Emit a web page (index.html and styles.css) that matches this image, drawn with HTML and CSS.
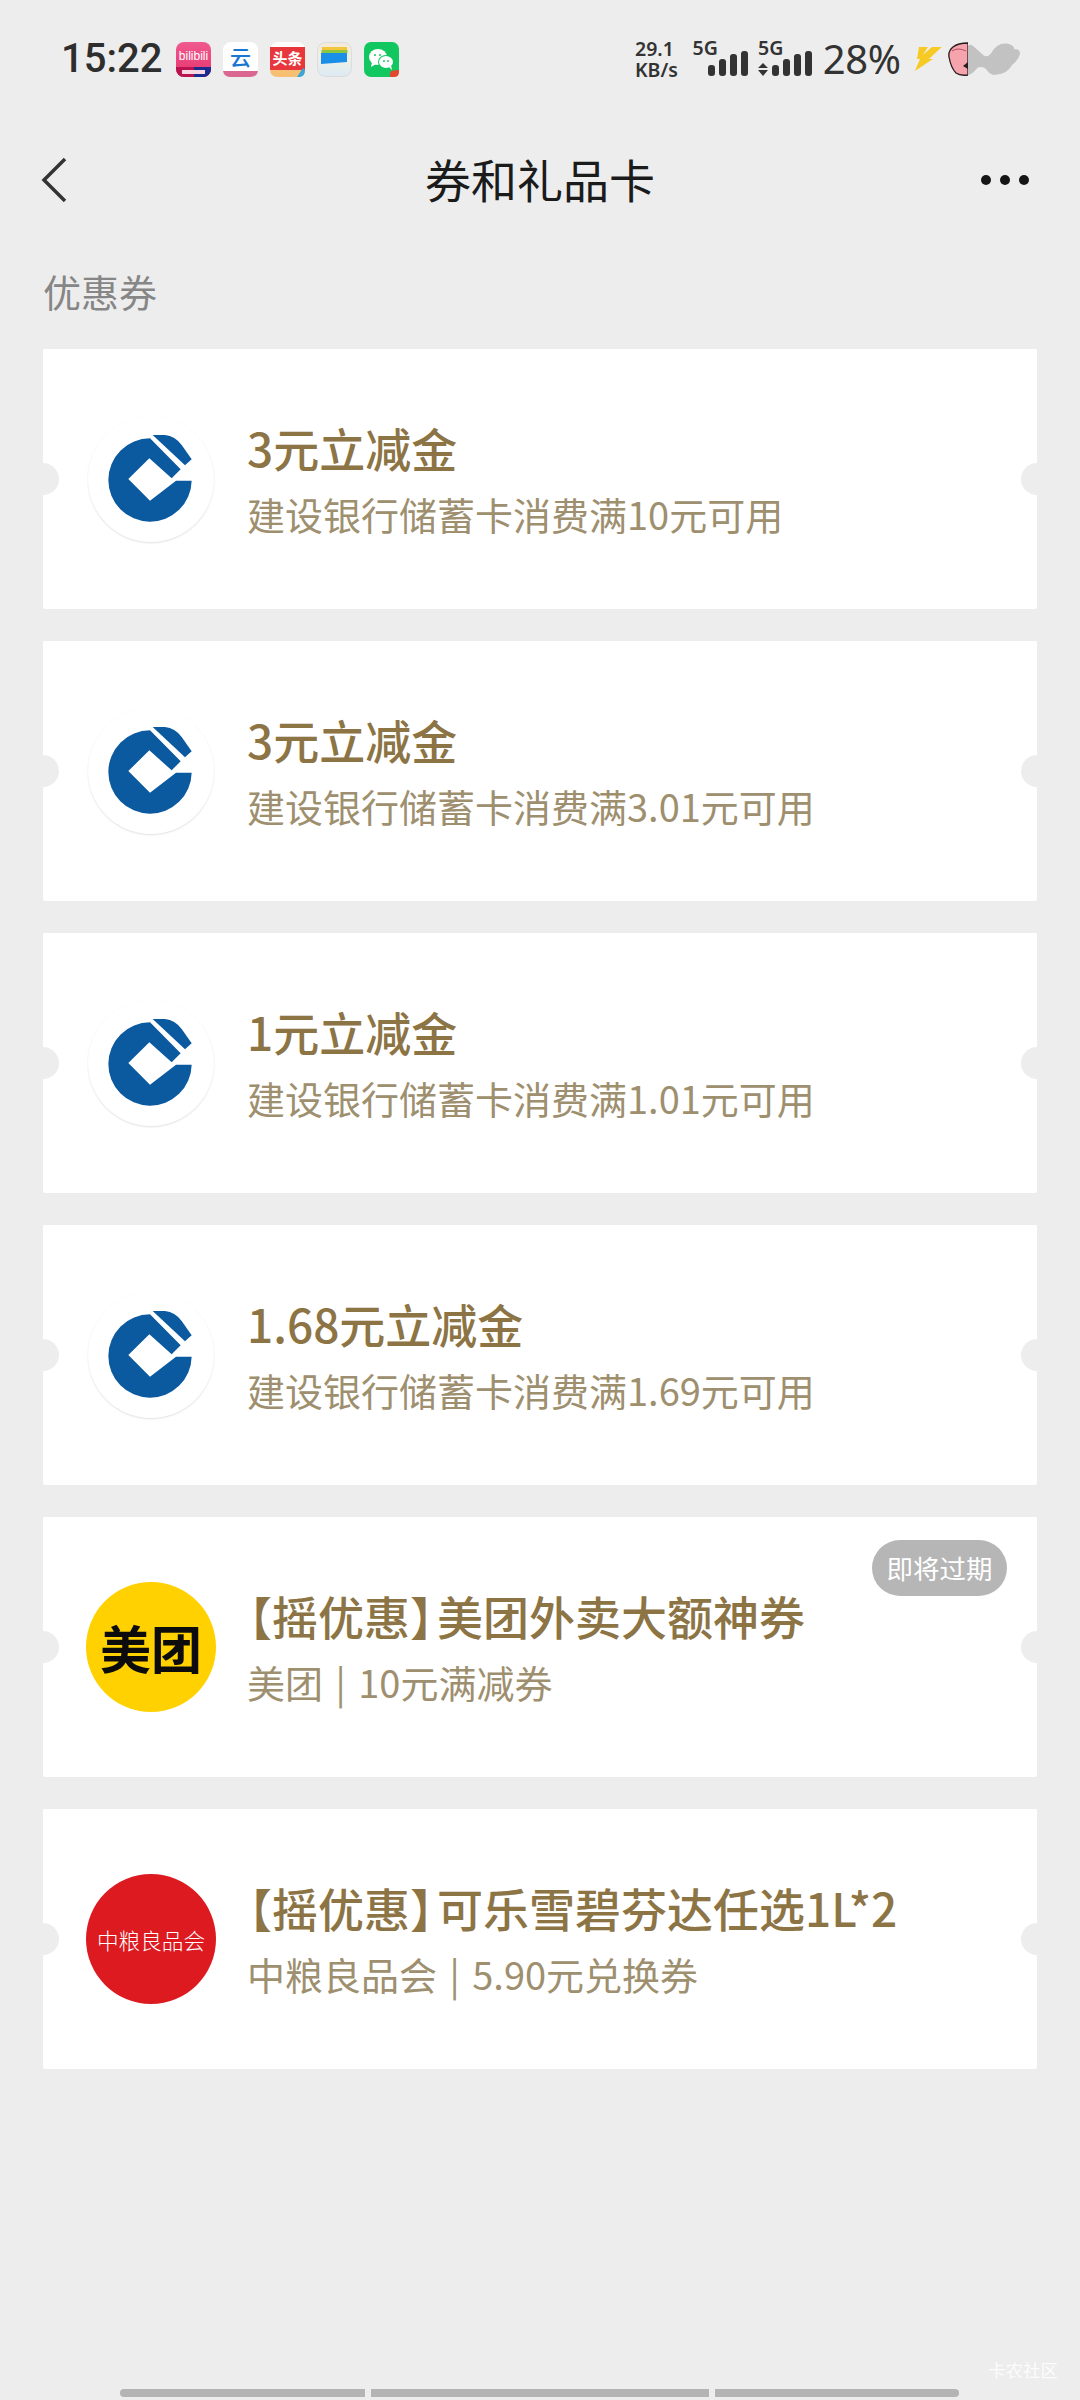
FILE: index.html
```html
<!DOCTYPE html>
<html lang="zh-CN">
<head>
<meta charset="utf-8">
<title>券和礼品卡</title>
<link rel="stylesheet" href="styles.css">
</head>
<body>
<svg class="defs" width="0" height="0" aria-hidden="true">
  <defs>
    <g id="ccb">
      <path fill="#0b5a9f" d="M240 85A125 125 0 1 0 365 212H318L240 272L175 207L238 145L305 205L332 178Z"/>
      <path fill="#0b5a9f" d="M248 75H285Q315 78 335 105L365 148L345 166Z"/>
    </g>
  </defs>
</svg>
<div class="page">
  <header class="status">
    <div class="status-left">
      <span class="time">15:22</span>
      <div class="apps">
        <svg class="app" viewBox="0 0 35 35"><defs><linearGradient id="bili" x1="0" y1="0" x2="0" y2="1"><stop offset="0" stop-color="#ef5a8e"/><stop offset=".7" stop-color="#ea3f78"/></linearGradient></defs><rect width="35" height="35" rx="8" fill="url(#bili)"/><path d="M0 25H35V27A8 8 0 0 1 27 35H8A8 8 0 0 1 0 27Z" fill="#b8134f"/><path d="M18 25H35V27A8 8 0 0 1 27 35H18Z" fill="#1b2a8f"/><text x="17.500" y="18" class="app-bili">bilibili</text><rect x="6" y="28" width="23" height="4" fill="#f6d7e2"/></svg>
        <svg class="app" viewBox="0 0 35 35"><rect width="35" height="35" rx="8" fill="#fff"/><path d="M0 29H35Q34 35 27 35H8Q1 35 0 29Z" fill="#d9678f"/><text x="17.500" y="23" class="app-yun">云</text></svg>
        <svg class="app" viewBox="0 0 35 35"><rect width="35" height="35" rx="8" fill="#fdfdfd"/><rect y="5" width="35" height="23" fill="#e8373c"/><path d="M0 28H35V27Q35 35 27 35H8Q0 35 0 27Z" fill="#f6bf72"/><text x="17.500" y="22" class="app-tt">头条</text><path d="M27 35L33 26L35 28Q35 34 30 35Z" fill="#3aa5d8"/></svg>
        <svg class="app" viewBox="0 0 35 35"><defs><linearGradient id="wal" x1="0" y1="0" x2="0" y2="1"><stop offset="0" stop-color="#f5e9d5"/><stop offset=".45" stop-color="#eef0e6"/><stop offset="1" stop-color="#dceaf4"/></linearGradient></defs><rect x=".5" y=".5" width="34" height="34" rx="8" fill="url(#wal)" stroke="#dcdcdc"/><rect x="5" y="5" width="25" height="3" fill="#f2c53c"/><rect x="4.500" y="8" width="26" height="3" fill="#8cc63f"/><path d="M4 11H30V20L4 22Z" fill="#1a8fe8"/></svg>
        <svg class="app" viewBox="0 0 35 35"><rect width="35" height="35" rx="7" fill="#12c660"/><ellipse cx="14" cy="15" rx="9" ry="8" fill="#fff"/><path d="M8 20L7 25L12 22Z" fill="#fff"/><ellipse cx="22" cy="20" rx="8" ry="7" fill="#12c660"/><ellipse cx="22" cy="20" rx="7" ry="6" fill="#fff"/><path d="M25 25L28 28L27 23Z" fill="#fff"/><circle cx="11" cy="13" r="1" fill="#12c660"/><circle cx="16" cy="13" r="1" fill="#12c660"/><circle cx="20" cy="19" r=".9" fill="#12c660"/><circle cx="24" cy="19" r=".9" fill="#12c660"/><path d="M26 35L26 31Q26 28 35 28V30Q35 35 30 35Z" fill="#e4472f"/></svg>
      </div>
    </div>
    <div class="status-right">
      <div class="speed">29.1<br>KB/s</div>
      <div class="sim">
        <span class="sim-label">5G</span>
        <svg class="bars" viewBox="0 0 40 26"><rect y="14" width="7" height="11" rx="3" fill="#333"/><rect x="11" y="8" width="7" height="17" rx="3" fill="#333"/><rect x="22" y="3" width="7" height="22" rx="3" fill="#333"/><rect x="33" y="0" width="7" height="25" rx="3" fill="#333"/></svg>
      </div>
      <div class="sim sim-two">
        <span class="sim-label">5G</span>
        <svg class="bars-wide" viewBox="0 0 54 26"><path d="M0 17L5 12L10 17ZM0 19H10L5 25Z" fill="#333"/><rect x="14" y="14" width="7" height="11" rx="3" fill="#333"/><rect x="25" y="8" width="7" height="17" rx="3" fill="#333"/><rect x="36" y="3" width="7" height="22" rx="3" fill="#333"/><rect x="47" y="0" width="7" height="25" rx="3" fill="#333"/></svg>
      </div>
      <span class="battery">28%</span>
      <svg class="bolt" viewBox="0 0 27 26"><path d="M4 1H13L8 9L17 1H27L14 13H18L0 25L5 13H2Z" fill="#f7c925"/></svg>
      <div class="pet">
        <svg class="pig" viewBox="0 0 20 34"><path d="M20 1Q10 1 5 5Q0 9 1 15Q3 26 8 31Q12 34 20 33Z" fill="#f5a3ad" stroke="#2b1d1d" stroke-width="1.300"/><path d="M4 9Q10 5 18 9" fill="none" stroke="#b5505f"/><path d="M15 24L20 20V27Z" fill="#2b1d1d"/></svg>
        <svg class="smudge" viewBox="0 0 54 34"><path d="M0 3Q3 1 6 4L16 13Q20 16 24 11Q30 0 40 1Q48 2 48 7Q54 6 54 12Q52 18 46 23Q40 33 30 33Q24 35 20 29Q16 24 10 26Q4 33 0 34Z" fill="#c2c2c2"/></svg>
      </div>
    </div>
  </header>

  <nav class="nav">
    <svg class="back" viewBox="0 0 26 46"><path d="M24 2L3 23L24 44" fill="none" stroke="#333" stroke-width="3.500"/></svg>
    <h1 class="nav-title">券和礼品卡</h1>
    <div class="more"><i></i><i></i><i></i></div>
  </nav>

  <h2 class="section">优惠券</h2>

  <main class="cards">
    <article class="card">
      <div class="logo logo-ring"><svg viewBox="54 18 378 378"><use href="#ccb"/></svg></div>
      <div class="info"><div class="name">3元立减金</div><div class="desc">建设银行储蓄卡消费满10元可用</div></div>
    </article>
    <article class="card">
      <div class="logo logo-ring"><svg viewBox="54 18 378 378"><use href="#ccb"/></svg></div>
      <div class="info"><div class="name">3元立减金</div><div class="desc">建设银行储蓄卡消费满3.01元可用</div></div>
    </article>
    <article class="card">
      <div class="logo logo-ring"><svg viewBox="54 18 378 378"><use href="#ccb"/></svg></div>
      <div class="info"><div class="name">1元立减金</div><div class="desc">建设银行储蓄卡消费满1.01元可用</div></div>
    </article>
    <article class="card">
      <div class="logo logo-ring"><svg viewBox="54 18 378 378"><use href="#ccb"/></svg></div>
      <div class="info"><div class="name">1.68元立减金</div><div class="desc">建设银行储蓄卡消费满1.69元可用</div></div>
    </article>
    <article class="card">
      <div class="logo logo-brand logo-mt">美团</div>
      <div class="info"><div class="name name-promo">【摇优惠<span class="close">】</span>美团外卖大额神券</div><div class="desc">美团 | 10元满减券</div></div>
      <span class="chip">即将过期</span>
    </article>
    <article class="card">
      <div class="logo logo-brand logo-zl">中粮良品会</div>
      <div class="info"><div class="name name-promo">【摇优惠<span class="close">】</span>可乐雪碧芬达任选1L*2</div><div class="desc">中粮良品会 | 5.90元兑换券</div></div>
    </article>
  </main>

  <footer class="foot">
    <span class="mark">卡农社区</span>
    <div class="tabs"><i class="tab tab-a"></i><i class="tab tab-b"></i><i class="tab tab-c"></i></div>
  </footer>
</div>
</body>
</html>
```

FILE: styles.css
```css
* { box-sizing: border-box; }
html, body { margin: 0; padding: 0; }
body {
  width: 1080px;
  height: 2400px;
  overflow: hidden;
  background: #ededed;
  font-family: "Noto Sans CJK SC", "Noto Sans", sans-serif;
}
.defs { position: absolute; }
.page { display: flex; flex-direction: column; height: 2400px; }

.status {
  height: 118px;
  padding: 0 61px;
  display: flex;
  justify-content: space-between;
  align-items: center;
  color: #333;
}
.status-left { display: flex; align-items: center; gap: 14px; }
.time { font: 500 40px/1 Roboto, sans-serif; color: #2e2e2e; }
.apps { display: flex; gap: 12px; }
.app { width: 35px; height: 35px; display: block; }
.app-bili { font: 400 12px "Liberation Sans", sans-serif; fill: #fff; text-anchor: middle; }
.app-yun { font: 500 21px "Noto Sans CJK SC", sans-serif; fill: #1976d2; text-anchor: middle; }
.app-tt { font: 700 15px "Noto Sans CJK SC", sans-serif; fill: #fff; text-anchor: middle; }

.status-right { display: flex; align-items: center; width: 384px; }
.speed {
  width: 58px;
  font: 600 19.500px/21px "Noto Sans", sans-serif;
  color: #333;
}
.sim { position: relative; width: 55px; height: 36px; }
.sim-label { position: absolute; left: 0; top: -3px; font: 600 19.500px/20px "Noto Sans", sans-serif; }
.bars { position: absolute; left: 15px; bottom: 0; width: 40px; height: 26px; }
.sim-two { width: 54px; margin-left: 11px; }
.bars-wide { position: absolute; left: 0; bottom: 0; width: 54px; height: 26px; }
.battery { margin-left: 11px; font: 400 40px/1 "Noto Sans", sans-serif; color: #333; letter-spacing: -.3px; }
.bolt { width: 27px; height: 26px; margin-left: 14px; }
.pet { position: relative; width: 72px; height: 34px; margin-left: 6px; }
.pig { position: absolute; left: 0; top: 0; width: 20px; height: 34px; }
.smudge { position: absolute; left: 20px; top: 0; width: 52px; height: 34px; }

.nav {
  height: 124px;
  padding: 0 41px;
  display: grid;
  grid-template-columns: 1fr auto 1fr;
  align-items: center;
}
.back { width: 26px; height: 46px; }
.nav-title { margin: 0 0 4px; font-size: 46px; line-height: 60px; font-weight: 400; color: #1b1b1b; }
.more { display: flex; gap: 9px; justify-self: end; margin-right: 10px; }
.more i { width: 10px; height: 10px; border-radius: 50%; background: #151515; }

.section {
  margin: 23px 0 32px;
  padding-left: 43px;
  font-size: 38px;
  line-height: 52px;
  font-weight: 400;
  color: #868686;
}

.cards { display: flex; flex-direction: column; gap: 32px; padding: 0 43px; }
.card {
  position: relative;
  height: 260px;
  padding-left: 45px;
  display: flex;
  align-items: center;
  gap: 33px;
  background: #fff;
  border-radius: 2px;
  overflow: hidden;
}
.card::before, .card::after {
  content: "";
  position: absolute;
  top: 114px;
  width: 32px;
  height: 32px;
  border-radius: 50%;
  background: #ededed;
}
.card::before { left: -16px; }
.card::after { right: -16px; }

.logo { flex: none; width: 126px; height: 126px; border-radius: 50%; }
.logo svg { display: block; width: 126px; height: 126px; }
.logo-ring { box-shadow: 0 1px 2px rgba(0, 0, 0, .12); }
.logo-brand {
  width: 130px;
  height: 130px;
  margin: 0 -2px;
  display: flex;
  align-items: center;
  justify-content: center;
  white-space: nowrap;
}
.logo-mt { background: #ffd100; color: #0c0c0c; font-size: 51px; font-weight: 700; }
.logo-zl { background: #dc1a20; color: #fff; font-size: 21.600px; font-weight: 300; }

.info { margin-top: 3px; }
.name { font-size: 46px; line-height: 60px; font-weight: 500; color: #8c7445; white-space: nowrap; }
.name-promo { font-feature-settings: "halt"; margin-left: 2px; }
.close { margin-right: 4px; }
.desc { margin-top: 7px; font-size: 38px; line-height: 60px; color: #9e8f6f; white-space: nowrap; word-spacing: 4px; }

.chip {
  position: absolute;
  top: 23px;
  right: 30px;
  width: 135px;
  height: 56px;
  border-radius: 28px;
  background: #b6b6b6;
  color: #fff;
  font-size: 26.500px;
  line-height: 56px;
  text-align: center;
}

.foot { margin-top: auto; position: relative; height: 11px; }
.mark {
  position: absolute;
  top: -29px;
  left: 988px;
  font-size: 17.500px;
  line-height: 20px;
  color: rgba(255, 255, 255, .85);
  white-space: nowrap;
}
.tabs { display: flex; gap: 6px; padding-left: 120px; }
.tab { display: block; height: 8px; background: #b4b4b4; }
.tab-a { width: 245px; border-radius: 4px 0 0 4px; }
.tab-b { width: 338px; }
.tab-c { width: 244px; border-radius: 0 4px 4px 0; }
```
